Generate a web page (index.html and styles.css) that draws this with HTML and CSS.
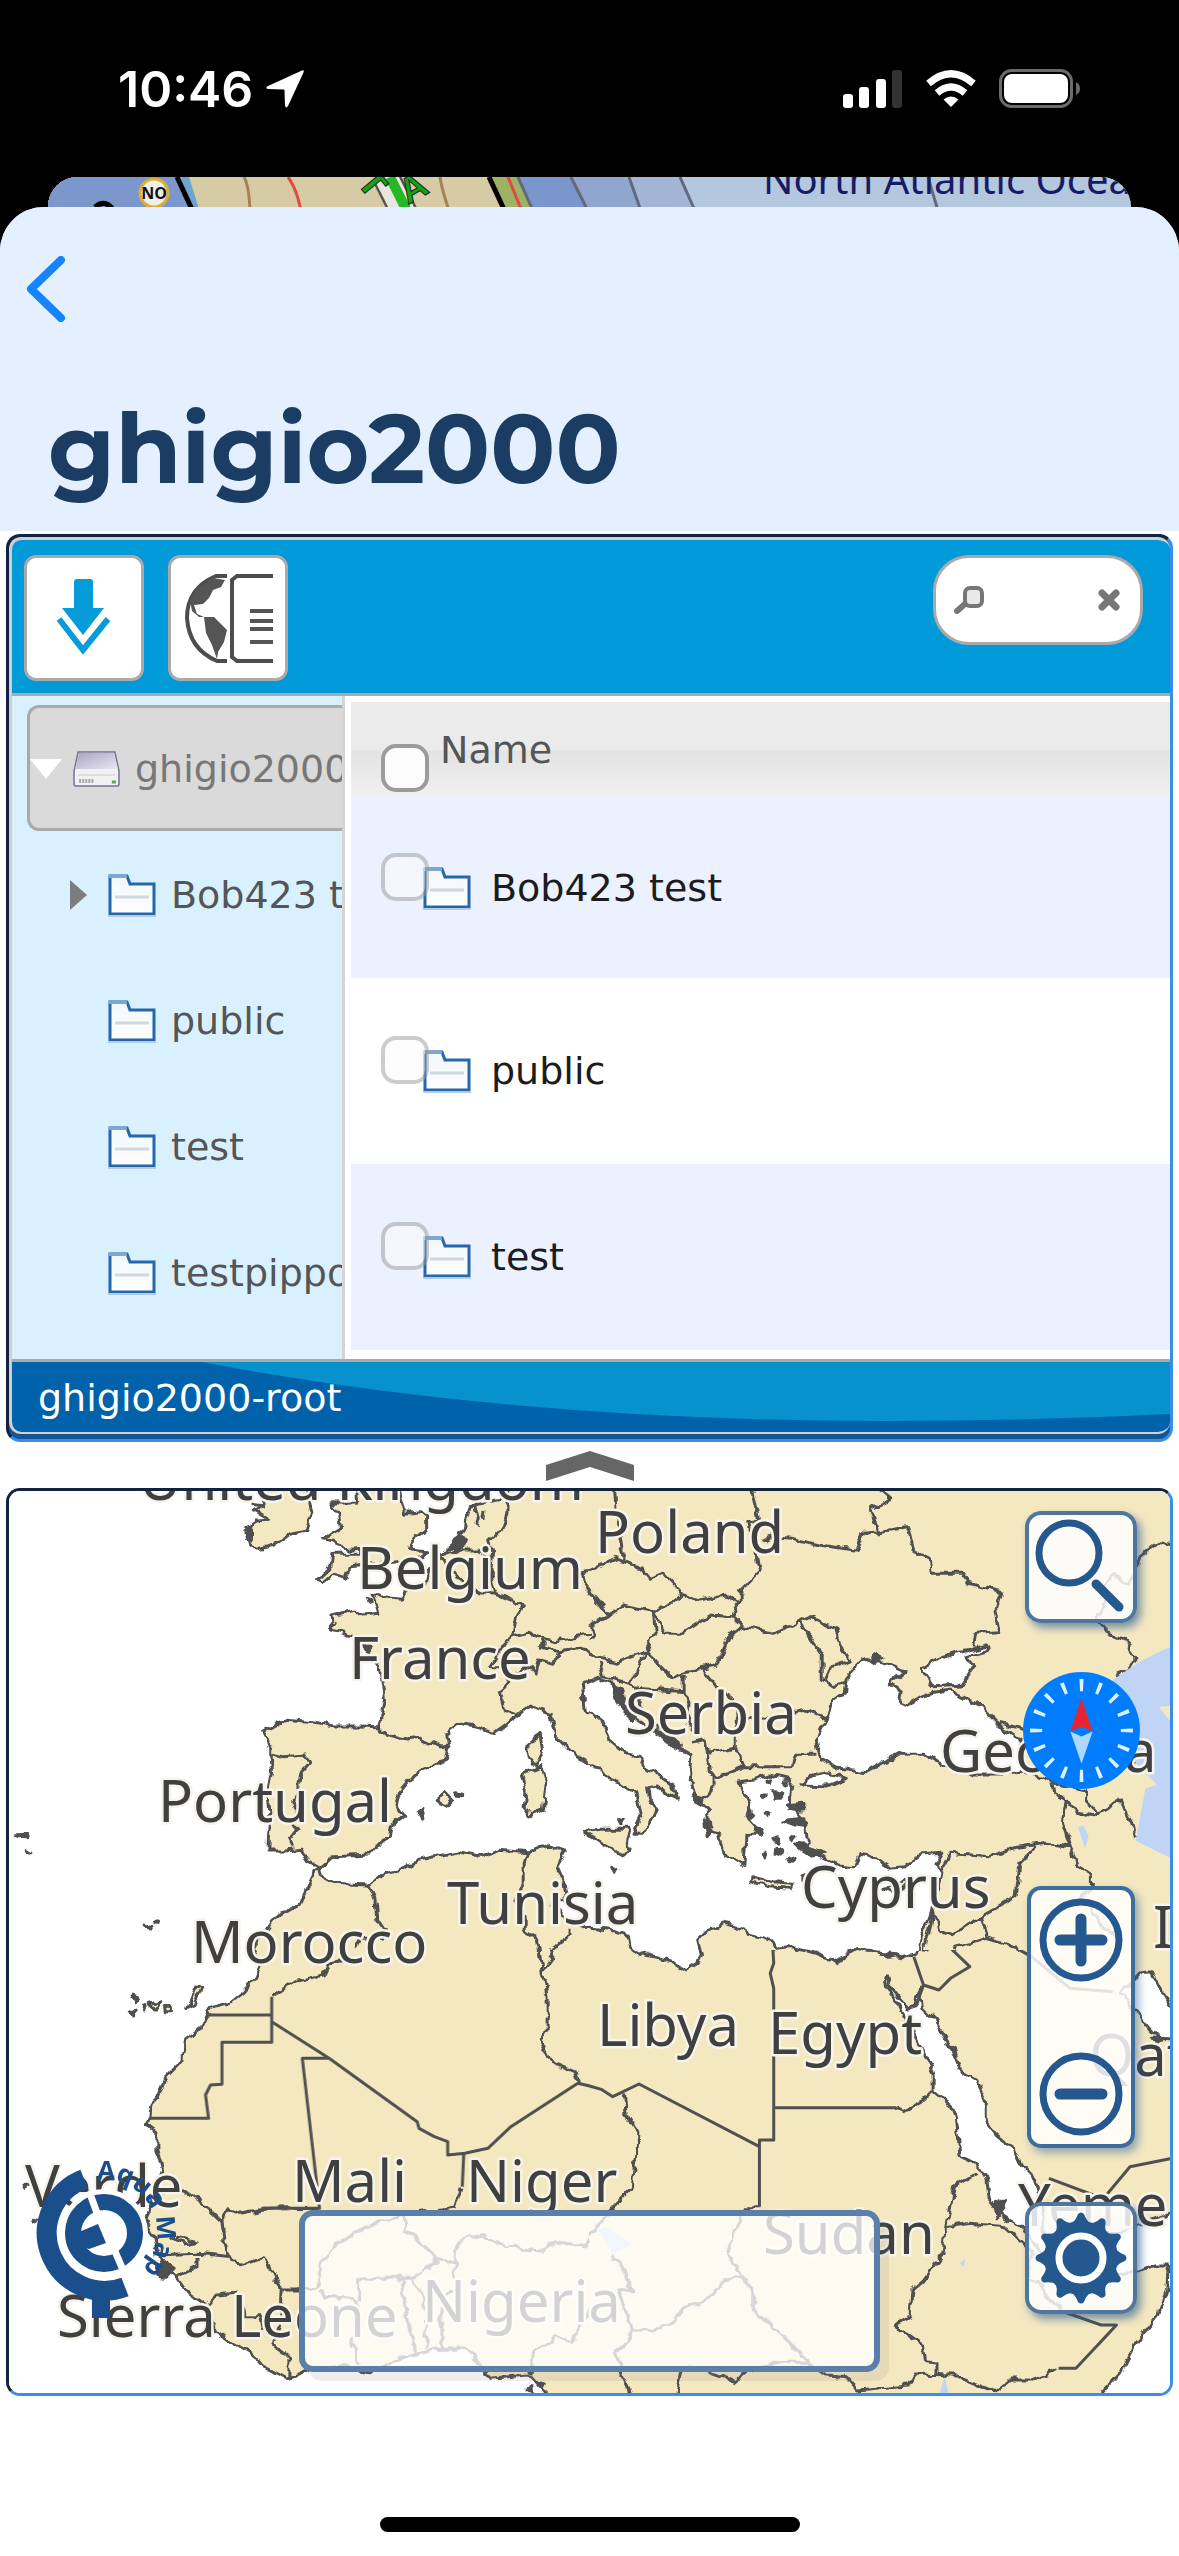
FILE: index.html
```html
<!DOCTYPE html>
<html lang="en">
<head>
<meta charset="utf-8">
<meta name="viewport" content="width=device-width, initial-scale=1">
<title>ghigio2000</title>
<link rel="stylesheet" href="styles.css">
</head>
<body>
<svg class="defs" aria-hidden="true">
  <defs>
    <linearGradient id="folderPaper" x1="0" y1="0" x2="0" y2="1"><stop offset="0" stop-color="#f2f7fc"/><stop offset="1" stop-color="#fdfefe"/></linearGradient>
    <linearGradient id="driveTop" x1="0" y1="0" x2="1" y2="1"><stop offset="0" stop-color="#a9a5c4"/><stop offset="1" stop-color="#e8e7f2"/></linearGradient>
    <symbol id="folder" viewBox="0 0 48 44">
      <path d="M2 3H19L22 11H46V41H2Z" fill="url(#folderPaper)" stroke="#2467ab" stroke-width="3"/>
      <path d="M1 3H19" stroke="#7ea6cf" stroke-width="4"/>
      <path d="M0 43H48" stroke="#b6cbdf" stroke-width="2"/>
      <path d="M7 24H41" stroke="#cdd8df" stroke-width="3"/>
    </symbol>
  </defs>
</svg>

<header class="status">
  <div class="status-left">
    <span class="clock">10:46</span>
    <svg class="locate" viewBox="0 0 40 40" aria-hidden="true"><path d="M37 1.500Q39.500 .5 38.500 3.500L23 37Q21 40 20 36.500L19.500 21.500Q19.500 20.500 18.500 20.500L3 20Q-.5 19 3 17Z" fill="#fff"/></svg>
  </div>
  <div class="status-right">
    <svg class="signal" viewBox="0 0 60 38" aria-hidden="true"><rect x="0" y="24" width="10" height="14" rx="3" fill="#fff"/><rect x="16" y="17" width="10" height="21" rx="3" fill="#fff"/><rect x="33" y="9" width="10" height="29" rx="3" fill="#fff"/><rect x="49" y="0" width="10" height="38" rx="3" fill="#333"/></svg>
    <svg class="wifi" viewBox="0 0 52 38" aria-hidden="true"><path d="M26 37L18.500 29.500Q26 23.500 33.500 29.500Z" fill="#fff"/><path d="M12 23Q26 11 40 23" fill="none" stroke="#fff" stroke-width="7"/><path d="M3.500 13.500Q26-6 48.500 13.500" fill="none" stroke="#fff" stroke-width="7"/></svg>
    <svg class="battery" viewBox="0 0 82 39" aria-hidden="true"><rect x="1.500" y="1.500" width="71" height="36" rx="11" fill="none" stroke="#6b6b6b" stroke-width="3"/><rect x="5" y="5" width="64" height="29" rx="8" fill="#fff"/><path d="M77 13Q81 15 81 19.500Q81 24 77 26Z" fill="#6b6b6b"/></svg>
  </div>
</header>

<div class="behind" aria-hidden="true">
  <svg viewBox="0 0 1083 54" preserveAspectRatio="xMinYMin slice">
    <rect width="1083" height="54" fill="#b3c8df"/>
    <path d="M0 0H632L656 54H0Z" fill="#a2b5d5"/>
    <path d="M0 0H581L600 54H0Z" fill="#90a6cf"/>
    <path d="M0 0H523L550 54H0Z" fill="#7a96cc"/>
    <path d="M0 0H470L492 54H0Z" fill="#9db263"/>
    <path d="M0 0H441L466 54H0Z" fill="#d6cba5"/>
    <path d="M0 0H141L158 54H0Z" fill="#6ea4cf"/>
    <path d="M0 0H129L154 54H0Z" fill="#7b97cb"/>
    <path d="M129 0L154 54" stroke="#000" stroke-width="5"/>
    <path d="M441 0L466 54" stroke="#000" stroke-width="5"/>
    <path d="M196 0Q203 12 202 54M392 0Q394 15 408 54" stroke="#a98054" stroke-width="3" fill="none"/>
    <path d="M240 0Q252 16 256 54M460 0L482 54" stroke="#e14a44" stroke-width="3" fill="none"/>
    <path d="M470 0L494 54M523 0L550 54M581 0L600 54M632 0L656 54M880 0L896 54" stroke="#62697a" stroke-width="3"/>
    <path d="M338 0L365 54" stroke="#555" stroke-width="28"/>
    <path d="M338 0L365 54" stroke="#e8e6de" stroke-width="23"/>
    <path d="M342 0L369 54" stroke="#27b827" stroke-width="10"/>
    <text class="bearing" x="308" y="6" transform="rotate(50 308 6)">T</text>
    <text class="bearing" x="360" y="28" transform="rotate(-30 360 28)">A</text>
    <circle cx="106" cy="16" r="14" fill="#f0efe8" stroke="#ddae35" stroke-width="3"/>
    <text class="notice" x="106" y="22">NO</text>
    <path d="M47 30Q56 22 64 31" stroke="#000" stroke-width="5" fill="none"/>
    <text class="ocean" x="715" y="17">North Atlantic Ocean</text>
  </svg>
</div>

<main class="sheet">
  <div class="heading">
    <button class="back" aria-label="Back"><svg viewBox="0 0 40 66" aria-hidden="true"><path d="M35 4L5 33L35 62" fill="none" stroke="#1684fa" stroke-width="8" stroke-linecap="round" stroke-linejoin="round"/></svg></button>
    <h1>ghigio2000</h1>
  </div>

  <section class="frame files" aria-label="Files">
    <div class="finder">
      <div class="toolbar">
        <button class="tool" aria-label="Download"><svg viewBox="0 0 60 90" aria-hidden="true"><path d="M20 9Q20 6 23 6H36Q39 6 39 9V35H50L29 62L8 35H20Z" fill="#069bd9"/><path d="M5 46L29 77L54 46" fill="none" stroke="#069bd9" stroke-width="6"/></svg></button>
        <button class="tool" aria-label="Show map and list"><svg viewBox="0 0 90 90" aria-hidden="true"><path d="M44 3H33Q4 15 4 45Q6 76 34 88H44" fill="none" stroke="#4d4d4d" stroke-width="4"/><path d="M30 5L42 7L38 14L30 17L26 25L20 31L11 32L14 41L21 44L16 44L9 38L7 27L14 15Z" fill="#555"/><path d="M21 44L31 44L44 57L41 69L35 79L34 86L29 72L23 60Z" fill="#555"/><path d="M90 3H54L49 7V84L54 88H90" fill="none" stroke="#4d4d4d" stroke-width="4"/><path d="M67 38H90M67 48H90M67 56H90M67 69H90" stroke="#555" stroke-width="4"/></svg></button>
        <form class="search">
          <svg class="lens" viewBox="0 0 30 28" aria-hidden="true"><path d="M12 17L3 25" stroke="#777" stroke-width="6" stroke-linecap="round"/><rect x="11" y="2" width="17" height="18" rx="5" fill="#e9e9e9" stroke="#777" stroke-width="4"/></svg>
          <input type="text" aria-label="Search files">
          <button type="reset" class="clear" aria-label="Clear search"><svg viewBox="0 0 22 22" aria-hidden="true"><path d="M4 4L18 18M18 4L4 18" stroke="#777" stroke-width="7" stroke-linecap="round"/></svg></button>
        </form>
      </div>
      <div class="browser">
        <nav class="tree" aria-label="Folders">
          <a href="#root" class="node selected"><svg class="open" viewBox="0 0 32 22" aria-hidden="true"><path d="M0 1H32L16 21Z" fill="#fff"/></svg><svg class="drive" viewBox="0 0 46 36" preserveAspectRatio="none" aria-hidden="true"><path d="M5 1H41L45 20V33Q45 35 43 35H3Q1 35 1 33V20Z" fill="#f1f1f3" stroke="#777392" stroke-width="1.500"/><path d="M6 2H40L44 18H2Z" fill="url(#driveTop)"/><path d="M5 24H41" stroke="#ccc" stroke-width="1"/><path d="M6 30H20" stroke="#aaa" stroke-width="4" stroke-dasharray="2 1"/><path d="M38 31H42" stroke="#50ad55" stroke-width="3"/></svg><span>ghigio2000</span></a>
          <a href="#bob" class="node"><svg class="closed" viewBox="0 0 18 30" aria-hidden="true"><path d="M1 0L18 15L1 30Z" fill="#7d7d7d"/></svg><svg class="folder"><use href="#folder"/></svg><span>Bob423 test</span></a>
          <a href="#public" class="node leaf"><svg class="folder"><use href="#folder"/></svg><span>public</span></a>
          <a href="#test" class="node leaf"><svg class="folder"><use href="#folder"/></svg><span>test</span></a>
          <a href="#testpippo" class="node leaf"><svg class="folder"><use href="#folder"/></svg><span>testpippo</span></a>
        </nav>
        <div class="list">
          <table>
            <thead><tr><th scope="col"><div class="cell"><input type="checkbox" aria-label="Select all"><span>Name</span></div></th></tr></thead>
            <tbody>
              <tr><td><div class="cell"><input type="checkbox" id="pick-bob"><svg class="folder"><use href="#folder"/></svg><label for="pick-bob">Bob423 test</label></div></td></tr>
              <tr><td><div class="cell"><input type="checkbox" id="pick-public"><svg class="folder"><use href="#folder"/></svg><label for="pick-public">public</label></div></td></tr>
              <tr><td><div class="cell"><input type="checkbox" id="pick-test"><svg class="folder"><use href="#folder"/></svg><label for="pick-test">test</label></div></td></tr>
            </tbody>
          </table>
        </div>
      </div>
      <footer class="path">
        <svg class="wave" viewBox="0 0 1160 70" preserveAspectRatio="none" aria-hidden="true"><path d="M190 0Q500 59 875 59Q1020 59 1160 52V0Z" fill="#0791cd"/></svg>
        <span>ghigio2000-root</span>
      </footer>
    </div>
  </section>

  <button class="handle" aria-label="Collapse file list"><svg viewBox="0 0 88 30" aria-hidden="true"><path d="M0 14L44 0L88 14V30L44 16L0 30Z" fill="#666"/></svg></button>

  <section class="frame map" aria-label="Map">
    <svg class="world" viewBox="0 0 1162 902" preserveAspectRatio="xMinYMin slice" role="img" aria-label="Map of Europe and northern Africa">
      <defs>
        <filter id="jag" filterUnits="userSpaceOnUse" x="0" y="0" width="1162" height="902"><feTurbulence type="fractalNoise" baseFrequency="0.09" numOctaves="2" seed="4"/><feDisplacementMap in="SourceGraphic" scale="9" xChannelSelector="R" yChannelSelector="G"/></filter>
      </defs>
      <rect x="-20" y="-20" width="1260" height="1000" fill="#fff"/>
      <g filter="url(#jag)">
        <svg x="-9" y="-21" width="590" height="480" viewBox="0 0 1542 1440" preserveAspectRatio="none">
          <g class="land">
            <path d="M668 40L690 100L665 120L705 148L665 150L660 175L640 185L650 220L670 238L715 225L760 190L800 180L815 125L800 40Z"/>
            <path d="M930 40L935 100L865 98L885 130L890 175L845 205L870 215L915 238L945 235L950 250L870 250L865 290L828 330L845 338L870 312L905 322L915 290L960 285L1030 280L1095 270L1110 245L1070 240L1075 215L1115 175L1115 140L1100 125L1060 130L1050 90L1040 40Z"/>
            <path d="M1340 30L1325 85L1250 100L1230 110L1215 175L1190 220L1150 255L1120 300L1110 340L1060 365L1050 385L1000 380L975 370L990 430L945 435L930 420L865 435L870 480L925 500L960 540L990 590L1000 640L1005 690L990 770L940 768L870 768L820 755L745 748L690 785L705 830L705 850L710 905L700 970L705 1030L700 1140L745 1140L790 1135L810 1180L835 1195L870 1160L965 1155L1000 1110L1020 1105L1025 1065L1055 1040L1035 1005L1045 965L1085 910L1165 865L1170 830L1165 790L1200 760L1245 768L1290 790L1345 745L1385 705L1440 730L1455 800L1500 850L1568 895L1620 930L1620 780L1568 750L1530 725L1522 640L1568 620L1620 600V30Z"/>
            <path d="M1412 790L1418 845L1400 888L1380 860L1380 820ZM1415 890L1428 935L1420 1020L1385 1035L1370 1010L1375 960L1365 915ZM1140 995L1165 970L1183 990L1165 1010ZM1620 1065L1568 1070L1525 1085L1568 1120L1620 1150Z"/>
            <path d="M835 1195L840 1220L870 1240L960 1245L1000 1215L1045 1205L1095 1168L1200 1145L1260 1160L1300 1138L1380 1145L1430 1122L1450 1140L1480 1140L1455 1190L1475 1240L1480 1290L1440 1300L1470 1340L1520 1370L1620 1365V1520H640L660 1430L715 1345L785 1300L810 1240L820 1205Z"/>
          </g>
          <g class="border">
            <path d="M1325 90L1325 130L1310 180L1280 210L1285 250L1280 300L1295 365M1150 255L1190 240L1245 240L1280 270M1150 260L1190 320L1250 365L1295 370L1365 405L1350 440L1340 500L1385 490L1420 505L1450 515L1500 500L1555 490L1545 465L1568 445M1340 500L1310 530L1280 590L1310 590L1330 640L1305 665L1320 715L1350 735M1310 600L1360 605L1390 590L1400 610L1410 570L1450 580L1460 545L1520 535L1568 570M1420 505L1415 530L1460 545M1568 410L1525 340L1520 310L1568 295"/>
            <path d="M985 770L1010 795L1060 810L1100 805L1145 830L1175 830M705 850L740 860L795 855L808 880L785 910L780 960L765 990L775 1020L765 1060L775 1080L755 1110L765 1130M965 1245L980 1290L985 1350L1005 1385L1000 1405L940 1405L930 1440M1380 1145L1370 1180L1370 1240L1345 1290L1370 1340L1370 1380L1405 1410L1410 1440M1495 1370L1495 1390L1440 1440"/>
            <path d="M1240 100L1250 150L1245 170M1265 120L1262 150M640 190L660 210M660 100L690 105M870 470L880 455"/>
            <path class="rock" d="M645 175L660 170L660 200L645 200ZM1185 215L1205 200L1215 215L1205 240L1185 245ZM1190 965L1212 970L1210 978L1195 975ZM1095 1030L1108 1020L1102 1045ZM40 1095L72 1092L68 1103L50 1103ZM66 1138L78 1146L68 1146ZM377 1365L397 1370L390 1380ZM405 1353L417 1353L415 1363L405 1362ZM958 385L970 390L960 395ZM950 525L968 525L965 545Z"/>
          </g>
        </svg>
        <svg x="581" y="-21" width="589" height="480" viewBox="26 0 1526 1440" preserveAspectRatio="none">
          <g class="land">
            <path d="M-20 30H1620V1500H870L885 1400L915 1310L935 1210L925 1180L940 1150L880 1155L840 1190L800 1195L750 1155L720 1150L710 1190L670 1185L590 1140L585 1060L545 1000L550 930L490 915L450 930L410 935L440 1000L430 1040L470 1090L430 1090L425 1190L375 1155L360 1090L335 1080L330 1020L300 985L285 950L290 850L265 840L200 790L150 750L100 690L80 640L50 625L10 640L10 710L60 760L75 810L115 850L160 860L155 880L240 945L250 985L230 975L200 945L175 950L180 985L200 1020L165 1090L140 1090L160 1040L145 970L100 935L70 920L60 895L30 890L0 855L-20 835Z"/>
            <path d="M10 1085L50 1075L130 1075L120 1120L130 1140L115 1160L70 1130ZM445 1220L500 1235L550 1240L545 1255L490 1250L445 1235ZM790 1255L830 1240L870 1220L840 1250L820 1272Z"/>
            <path d="M-20 1365L10 1370L75 1378L125 1395L130 1430L155 1450L240 1475L275 1502L305 1480L315 1455L305 1410L330 1380L380 1360L430 1380L435 1395L500 1415L508 1435L540 1430L610 1450L665 1475L720 1435L770 1450L860 1455L900 1540H-20Z"/>
          </g>
          <g class="sea">
            <path d="M740 565L790 580L840 605L800 640L835 665L830 695L850 705L900 670L960 660L1040 710L1090 770L1140 810L1150 900L1090 915L1020 915L950 890L890 850L830 850L790 875L745 905L670 895L625 870L612 810L640 745L650 700L685 670L690 625L725 575ZM885 595L930 565L990 545L1055 525L1060 540L1000 560L1020 590L990 645L915 650ZM570 945L600 915L640 905L690 925L640 948Z"/>
          </g>
          <g class="border">
            <path d="M90 60L95 150L115 270M-10 320L35 295L95 265L160 295L180 325L215 310L265 370L235 400L190 425L115 405L75 435L15 350L0 320M265 370L310 390L375 375L415 400L395 440L340 435L265 490L220 490L190 425L195 485L170 545L95 575L-10 545M445 60L460 145L440 160L455 240L465 305L415 365L415 400M475 215L500 200L550 205L620 225L715 240L735 190L775 185L750 120L805 90L765 50M775 185L850 170L865 240L905 265L910 310L990 310L1010 340L1090 365L1075 420L1085 485L1025 490L1020 530M0 500L35 505L30 465L75 435"/>
            <path d="M170 545L235 620L315 595L355 585L390 495L420 465L395 440M420 470L500 490L570 455L600 440L660 475L670 520L700 570L650 590L630 640M570 455L625 550L625 630L650 650L690 640M50 575L60 620L130 640L145 600L170 550M130 640L150 655L270 665L270 610M315 595L350 650L400 690L405 740L480 745L585 720L640 745M405 740L405 830L425 890L550 890L560 850L610 850M270 665L285 700L280 760L305 800M145 660L160 710L200 780M330 850L405 835M330 850L335 905L360 920L425 890M290 820L325 810L330 850M350 920L350 950L310 1000"/>
            <path d="M1150 900L1225 935L1230 970L1260 990L1250 1060L1270 1130L1205 1120L1115 1135L1055 1160L960 1150L935 1200M1090 760L1160 780L1240 800L1340 860L1440 880M1225 935L1310 960L1310 990L1340 1030M1260 985L1290 1030L1330 1040L1400 990L1415 1030L1430 1060L1440 1110M1180 1130L1140 1180L1130 1280L1040 1340L965 1395L930 1380L915 1310M1270 1130L1290 1190L1325 1215L1325 1245L1300 1290L1340 1350L1390 1400L1400 1450M1040 1340L1055 1400L965 1435M1055 1400L1100 1415L1180 1470M1552 230L1500 215L1450 260L1445 290L1420 345L1380 310L1360 350L1355 400L1340 445L1365 490L1410 510L1440 560L1440 580L1390 620M915 1310L910 1360L890 1450"/>
            <path class="rock" d="M85 650L105 660L115 720L150 740L140 755L105 715ZM190 785L225 790L265 830L255 838L215 805ZM290 975L320 985L315 1010L300 1000ZM325 1050L340 1080L332 1100ZM485 930L495 930L495 940L485 940ZM500 965L520 965L520 985L500 985ZM525 935L540 935L535 945ZM470 975L480 975L475 985ZM535 1005L575 1000L580 1020L540 1020ZM525 1050L580 1040L585 1070L560 1065ZM480 1030L490 1030L488 1040ZM435 1015L450 1040L440 1050ZM455 1075L470 1080L465 1090ZM500 1105L515 1100L510 1120ZM510 1135L525 1140L520 1155L508 1150ZM475 1150L485 1150L480 1165ZM550 1100L560 1100L555 1110ZM560 1125L590 1130L640 1150L600 1155ZM540 1160L555 1165L545 1175ZM580 1215L590 1210L580 1235ZM85 1192L98 1200L92 1210ZM100 1048L112 1052L105 1060ZM755 550L785 565L765 580Z"/>
          </g>
        </svg>
        <svg x="-9" y="459" width="590" height="460" viewBox="0 60 1542 1380" preserveAspectRatio="none">
          <g class="land">
            <path d="M640 -20L660 60L680 110L665 150L640 185L595 225L545 240L520 300L485 330L470 400L435 440L415 500L395 525L385 585L410 605L410 660L425 720L400 800L375 870L400 920L410 960L430 1010L465 1045L490 1085L545 1130L560 1200L605 1235L655 1270L685 1305L750 1345L805 1320L890 1305L965 1325L1030 1290L1090 1270L1150 1255L1215 1255L1250 1290L1280 1345L1385 1335L1425 1385V1480H1620V-20Z"/>
            <path d="M488 235L515 165L525 175L505 225ZM390 225L418 212L405 240ZM430 232H448V248H432Z"/>
          </g>
          <g class="border">
            <path d="M835 835L685 838L625 850L600 840L580 875L530 820L490 785L425 790M710 200L770 155L845 135L860 100L905 90L905 50L940 40L960 20M1405 30L1417 125L1430 200L1430 300L1412 330L1440 395L1500 425L1510 460M1417 125L1445 80L1440 55L1495 10M1208 770L1190 835L1060 855L990 875L940 900L880 940L840 1000L830 1070L780 1080L735 1080L710 1020L690 980L640 1000L605 995M580 875L585 930L605 995M605 980L520 970L400 975M515 985L515 1010L465 1040M460 920L510 935L480 942L440 915M545 1125L565 1095L615 1090L640 1160L680 1160L690 1200M735 1080L730 1190L715 1245L755 1280L755 1345"/>
            <path d="M835 1080L850 1100L930 1110L945 1180L920 1230L940 1305M940 1045L1080 1045L1140 1000L1135 975L1060 900L1060 860M940 1045L940 1110M1050 1045L1070 1200L1090 1265M1080 1045L1110 1110L1115 1255M1190 1000L1190 1080L1155 1110L1155 1255M1140 985L1190 1000L1190 960L1210 930L1260 915L1320 950L1420 960L1460 935L1530 950L1568 890M1385 1330L1395 1270L1450 1220L1490 1240L1530 1160L1568 1100"/>
            <path class="rock" d="M345 195L360 200L352 212ZM338 250L350 240L352 255ZM372 228L382 230L378 238ZM60 765L78 770L65 778ZM82 865L95 868L85 873ZM412 1010L435 1000L455 1015L430 1045L415 1040ZM1375 1380L1390 1370L1392 1385ZM1410 1360L1425 1365L1420 1375Z"/>
          </g>
        </svg>
        <svg x="581" y="459" width="589" height="460" viewBox="26 60 1526 1380" preserveAspectRatio="none">
          <rect x="-20" y="0" width="1640" height="1500" fill="#f4e8c1"/>
          <g class="sea">
            <path d="M125 0L130 50L155 70L240 95L275 122L305 100L315 75L305 40L320 0ZM490 0L508 55L540 50L610 70L665 95L720 55L770 70L840 80L865 70L885 40L890 0Z"/>
            <path d="M795 135L805 170L850 240L870 235L880 170L888 235L920 270L960 350L985 420L1030 450L1050 500L1050 570L1080 615L1120 650L1140 700L1180 750L1200 820L1200 920L1400 910L1544 845L1640 820V1500H1330L1355 1385L1400 1330L1440 1240L1500 1150L1520 1075L1525 1005L1490 1005L1450 1025L1300 1030L1210 1000L1170 925L1130 885L1090 855L1060 810L1055 750L1030 705L985 680L975 560L965 530L915 480L915 430L860 300L830 240L790 155Z"/>
            <path d="M1450 130L1480 125L1510 190L1544 245L1600 260V330L1500 325L1470 285L1400 190Z"/>
          </g>
          <g class="border">
            <path d="M115 490L120 555L150 610L135 775L85 835L0 950M465 830L425 830L405 900L380 965L420 1040L375 1050L330 1110L265 1140L240 1180L180 1200L140 1200L95 1270L115 1350L135 1400M85 970L120 1030L135 1085L100 1080L135 1200M420 1040L450 1090L450 1140L540 1230L595 1300L640 1335L690 1340L720 1380L850 1365L870 1332L965 1335L1075 1385L1115 1350L1170 1350L1240 1315M250 1400L265 1320L300 1310L405 1355L425 1325L515 1300L595 1300M1025 730L970 770L950 890L940 970L890 1050L860 1080L855 1160L815 1185L890 1245L895 1295L925 1300L925 1330M950 890L1010 880L1100 890L1170 965L1160 1050L1190 1060L1240 1140M820 533L840 545L880 520L915 480M890 30L915 0M890 60L905 60L910 20"/>
            <path class="rock" d="M1075 820L1100 805L1095 840L1080 860ZM770 70L830 75L800 82ZM950 345L970 355L975 385ZM1480 325L1510 325L1500 345Z"/>
          </g>
        </svg>
      </g>
      <svg x="-9" y="459" width="590" height="460" viewBox="0 60 1542 1380" preserveAspectRatio="none">
        <path class="border" d="M540 255H710M710 200V337H580V463L550 465L537 495L545 565H390M710 275L860 385L1090 575L1095 595L1135 620L1170 635V675L1215 670L1275 655L1335 590L1510 460L1568 475M860 385H790L835 835H685M1212 670L1208 770"/>
      </svg>
      <svg x="581" y="459" width="589" height="460" viewBox="26 60 1526 1380" preserveAspectRatio="none">
        <path class="border" d="M508 55L500 60L502 100L493 130L502 175V630H465V830M465 650L153 462L85 500L55 478L0 460M502 533H820M1215 745L1330 795L1360 800L1425 710L1600 670M865 80L890 165L870 230M890 165L930 180L960 145L1010 110L965 60L1050 30L1100 35L1170 80L1270 175L1380 185M1240 1315H1285L1390 1185H1350L1240 1140"/>
        <path class="lake" d="M65 890L135 945L85 970L48 900ZM985 1000L998 985L995 1012ZM945 1340L955 1390L932 1390Z"/>
      </svg>
      <svg x="581" y="-21" width="589" height="480" viewBox="26 0 1526 1440" preserveAspectRatio="none">
        <path class="lake" d="M1380 630L1450 575L1520 535H1600V650L1530 680L1600 700L1500 710L1560 800L1600 1190L1540 1170L1440 1112L1465 955L1495 945L1440 880ZM1290 1070L1305 1068L1318 1100L1308 1135Z"/>
      </svg>
      <g class="places">
        <text x="130" y="9">United Kingdom</text>
        <text x="586" y="62">Poland</text>
        <text x="348" y="98">Belgium</text>
        <text x="340" y="188">France</text>
        <text x="616" y="243">Serbia</text>
        <text x="931" y="281">Georgia</text>
        <text x="149" y="331">Portugal</text>
        <text x="438" y="433">Tunisia</text>
        <text x="792" y="417">Cyprus</text>
        <text x="182" y="472">Morocco</text>
        <text x="1144" y="457">Iran</text>
        <text x="588" y="555">Libya</text>
        <text x="759" y="563">Egypt</text>
        <text x="1080" y="585">Qatar</text>
        <text x="283" y="711">Mali</text>
        <text x="457" y="711">Niger</text>
        <text x="16" y="716">Verde</text>
        <text x="1009" y="735">Yemen</text>
        <text x="754" y="763">Sudan</text>
        <text x="413" y="831">Nigeria</text>
        <text x="48" y="846">Sierra Leone</text>
      </g>
    </svg>

    <svg class="brand" viewBox="-75 -76 160 168" role="img" aria-label="Aqua Map">
      <path d="M-19 -54A57 57 0 0 0 22 54" fill="none" stroke="#1b4f8b" stroke-width="20"/>
      <circle r="44" cx="1" fill="#fff"/>
      <path d="M-11 60H7V85H-11Z" fill="#1b4f8b"/>
      <circle cx="1" r="31" fill="none" stroke="#1b4f8b" stroke-width="16"/>
      <path d="M-14 -42L-6 -20M11 16L23 44" stroke="#fff" stroke-width="7"/>
      <path d="M-24 -1L-5 -9L3 10L-14 16L-26 12Z" fill="#1b4f8b"/>
      <path id="brandArc" d="M-6 -53A53 53 0 0 1 34 41" fill="none"/>
      <text><textPath href="#brandArc">Aqua Map</textPath></text>
    </svg>

    <div class="readout" role="status"></div>

    <div class="controls">
      <button class="chip" aria-label="Search map"><svg viewBox="0 0 104 104" aria-hidden="true"><circle cx="40" cy="38" r="30" fill="none" stroke="#24588f" stroke-width="7"/><path d="M67 69L90 92" stroke="#24588f" stroke-width="9" stroke-linecap="round"/></svg></button>
      <button class="compass" aria-label="Compass"><svg viewBox="-58 -58 116 116" aria-hidden="true"><circle r="58" fill="#007dfc"/><circle r="45" fill="none" stroke="#dff0ff" stroke-width="12" pathLength="160" stroke-dasharray="2 8" stroke-dashoffset="1"/><path d="M0 -32L11 1L0 -4L-11 1Z" fill="#e62531"/><path d="M-11 1L0 6L11 1L0 33Z" fill="#add8ff"/></svg></button>
      <div class="zoom">
        <button aria-label="Zoom in"><svg viewBox="0 0 84 84" aria-hidden="true"><circle cx="42" cy="42" r="38" fill="none" stroke="#24588f" stroke-width="7"/><path d="M21 42H63M42 21V63" stroke="#24588f" stroke-width="11" stroke-linecap="round"/></svg></button>
        <button aria-label="Zoom out"><svg viewBox="0 0 84 84" aria-hidden="true"><circle cx="42" cy="42" r="38" fill="none" stroke="#24588f" stroke-width="7"/><path d="M21 42H63" stroke="#24588f" stroke-width="11" stroke-linecap="round"/></svg></button>
      </div>
      <button class="chip" aria-label="Settings"><svg viewBox="-52 -52 104 104" aria-hidden="true">
        <defs><path id="tooth" d="M-10 -34Q-5 -38 -3 -44Q0 -47 3 -44Q5 -38 10 -34Z"/></defs>
        <g fill="#24588f"><circle r="37"/><use href="#tooth"/><use href="#tooth" transform="rotate(30)"/><use href="#tooth" transform="rotate(60)"/><use href="#tooth" transform="rotate(90)"/><use href="#tooth" transform="rotate(120)"/><use href="#tooth" transform="rotate(150)"/><use href="#tooth" transform="rotate(180)"/><use href="#tooth" transform="rotate(210)"/><use href="#tooth" transform="rotate(240)"/><use href="#tooth" transform="rotate(270)"/><use href="#tooth" transform="rotate(300)"/><use href="#tooth" transform="rotate(330)"/></g>
        <circle r="22" fill="none" stroke="#fff" stroke-width="7"/></svg></button>
    </div>
  </section>
  <div class="home"></div>
</main>
</body>
</html>
```
FILE: styles.css
```css
* { box-sizing: border-box; }
body { margin: 0; background: #000; font-family: "DejaVu Sans", Verdana, sans-serif; font-size: 38px; color: #555; }
button { padding: 0; border: 0; background: none; font: inherit; }
svg { display: block; }
.defs { position: absolute; width: 0; height: 0; }

.status { display: flex; justify-content: space-between; align-items: center; height: 177px; padding: 0 98px 0 118px; }
.status-left, .status-right { display: flex; align-items: center; }
.status-left { gap: 12px; }
.status-right { gap: 22px; }
.clock { font: 600 50px/60px Inter, sans-serif; color: #fff; }
.locate { width: 40px; height: 40px; }
.signal { width: 60px; height: 38px; }
.wifi { width: 52px; height: 38px; }
.battery { width: 82px; height: 39px; }

.behind { height: 70px; margin: 0 48px -40px; border-radius: 30px 30px 0 0; overflow: hidden; background: #7b97cb; }
.behind svg { width: 100%; height: 54px; }
.ocean { font: 40px "Noto Sans", sans-serif; fill: #171b66; }
.notice { font: 700 16px "Open Sans", sans-serif; fill: #111; text-anchor: middle; }
.bearing { font: 700 36px "Liberation Sans", sans-serif; fill: #12a512; stroke: #222; stroke-width: 1px; }

.sheet { position: relative; display: flex; flex-direction: column; background: #fff; border-radius: 44px 44px 0 0; }
.heading { height: 324px; padding: 49px 26px 0; background: #e4f0ff; border-radius: 44px 44px 0 0; }
.back { display: block; }
.back svg { width: 40px; height: 66px; }
h1 { margin: 67px 0 0 22px; font: 700 96px/120px Montserrat, Inter, sans-serif; color: #1b3d63; }

.frame { margin: 3px 6px 0; border: 3px solid; border-color: #12233f #3a8de8 #3a8de8 #12233f; border-radius: 14px; overflow: hidden; }
.files { padding-bottom: 5px; background: #135694; }
.finder { border: solid #d0d0d0; border-width: 3px 0 2px 3px; border-radius: 12px; overflow: hidden; background: #fff; }
.toolbar { display: flex; align-items: flex-start; gap: 24px; height: 156px; padding: 15px 27px 0 12px; background: #009ad9; border-bottom: 3px solid #aaa; }
.tool { display: grid; place-items: center; width: 120px; height: 126px; border: 3px solid #aaa; border-radius: 12px; background: #fff; }
.tool svg { width: 60px; height: 90px; }
.tool + .tool svg { width: 90px; height: 90px; }
.search { display: flex; align-items: center; width: 210px; height: 90px; margin-left: auto; padding: 0 20px 0 18px; border: 3px solid #aaa; border-radius: 36px; background: #fff; }
.lens { flex: none; width: 30px; height: 28px; }
.search input { flex: 1; min-width: 0; padding: 0 8px; border: 0; background: none; font: inherit; }
.clear svg { width: 22px; height: 22px; }

.browser { display: flex; height: 663px; }
.tree { flex: none; width: 333px; padding: 9px 0 0 15px; background: #d9f1ff; border-right: 3px solid #d4d4d4; overflow: hidden; }
.node { display: flex; align-items: center; height: 126px; padding: 2px 0 0 42px; color: #555; text-decoration: none; white-space: nowrap; }
.node.leaf { padding-left: 81px; }
.node .folder { margin-right: 15px; }
.folder { flex: none; width: 48px; height: 44px; }
.closed { flex: none; width: 18px; height: 30px; margin-right: 21px; }
.node.selected { padding-left: 0; color: #777; background: #dadada; border: 3px solid #aaa; border-right: 0; border-radius: 12px 0 0 12px; }
.open { flex: none; width: 32px; height: 22px; margin-right: 11px; }
.drive { flex: none; width: 47px; height: 36px; margin-right: 15px; }

.list { flex: 1; padding: 6px 0 0 6px; }
table { width: 100%; border-collapse: collapse; }
th, td { padding: 0 0 0 30px; text-align: left; font-weight: 400; }
th { height: 96px; background: linear-gradient(#ebebeb 0 50%, #e3e3e3 51%, #f1f1f1); }
td { height: 186px; color: #1c1c1c; }
tbody tr:first-child td { height: 180px; }
tbody tr:nth-child(odd) { background: #ebf1fe; }
.cell { display: flex; align-items: center; }
input[type="checkbox"] { flex: none; appearance: none; width: 48px; height: 48px; margin: 0; border: 4px solid #9b9b9b; border-radius: 15px; background: #fcfcfc; }
th .cell { height: 96px; }
th input[type="checkbox"] { margin: 36px 11px 0 0; }
th span { line-height: 100px; }
td input[type="checkbox"] { position: relative; margin-bottom: 22px; opacity: .5; }
td .folder { margin: 0 20px 0 -6px; }

.path { position: relative; display: flex; align-items: center; height: 73px; padding: 2px 0 0 26px; border-top: 3px solid #aaa; background: #0062ab; color: #fff; }
.path span { position: relative; }
.wave { position: absolute; inset: 0; width: 100%; height: 100%; }

.handle { display: flex; justify-content: center; height: 43px; padding-top: 9px; }
.handle svg { width: 88px; height: 30px; }

.map { position: relative; }
.world { width: 100%; height: 902px; }
.land, .sea, .border { stroke: #505050; stroke-linejoin: round; }
.land path, .sea path, .border path, path.border { vector-effect: non-scaling-stroke; stroke-width: 3px; }
.land { fill: #f4e8c1; }
.sea { fill: #fff; }
.border { fill: none; }
.rock { fill: #505050; }
.lake { fill: #c0d5f5; }
.places { font: 58px "Noto Sans", sans-serif; fill: #404040; stroke: #f7f4ec; stroke-width: 5px; stroke-linejoin: round; paint-order: stroke; }

.brand { position: absolute; left: 19px; bottom: 68px; width: 160px; height: 168px; }
.brand text { font: 700 26px "Open Sans", sans-serif; fill: #1b4f8b; }
.readout { position: absolute; left: 25%; right: 25%; bottom: 21px; height: 162px; border: 6px solid #5a7fab; border-radius: 14px; background: rgba(255, 255, 255, .77); box-shadow: 9px 9px 0 rgba(120, 120, 120, .13); }
.controls { position: absolute; top: 20px; right: 30px; display: flex; flex-direction: column; align-items: center; width: 118px; }
.chip { width: 112px; height: 112px; border: 4px solid #4f779e; border-radius: 16px; background: rgba(255, 255, 255, .83); box-shadow: 4px 5px 9px rgba(36, 88, 143, .6); }
.chip svg { width: 104px; height: 104px; }
.compass { margin: 49px 0 97px; }
.compass svg { width: 117px; height: 117px; }
.zoom { display: flex; flex-direction: column; justify-content: space-between; align-items: center; width: 108px; height: 262px; margin-bottom: 54px; padding: 8px 0; border: 4px solid #3c6d9e; border-radius: 14px; background: rgba(255, 255, 255, .84); box-shadow: 4px 5px 8px rgba(36, 88, 143, .45); }
.zoom svg { width: 84px; height: 84px; }

.home { width: 420px; height: 15px; margin: 121px auto 24px; border-radius: 8px; background: #000; }
```
